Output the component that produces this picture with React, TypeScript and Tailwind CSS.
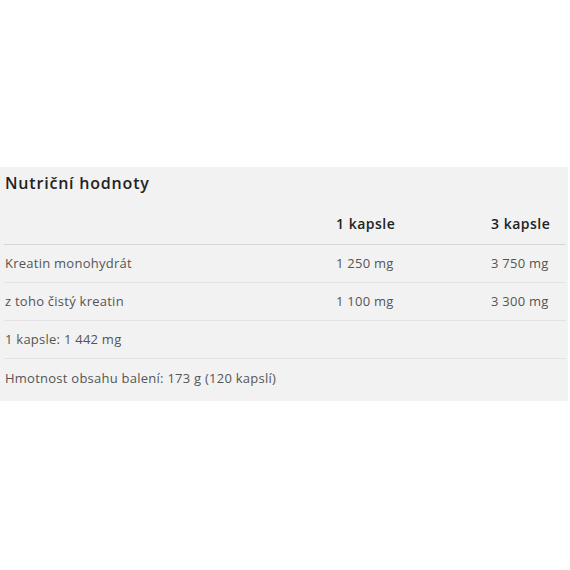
export default function App() {
  const rows = [
    ["Kreatin monohydrát", "1 250 mg", "3 750 mg"],
    ["z toho čistý kreatin", "1 100 mg", "3 300 mg"],
  ];
  return (
    <div className="w-[570px] h-[570px] bg-white" style={{ fontFamily: '"Open Sans", sans-serif' }}>
      <div className="h-[167px]" />
      <div className="w-[568px] bg-[#f2f2f2] pl-[4px] pr-[2px] pb-[4px]">
        <div className="h-[32px] flex items-center pl-[1px] text-[16px] tracking-[0.8px] font-semibold text-[#222]">
          Nutriční hodnoty
        </div>
        <div className="grid grid-cols-[332px_155px_1fr] h-[46px] pt-[3px] items-center border-b border-[#d6d6d6] text-[14px] tracking-[0.5px] font-semibold text-[#222]">
          <div />
          <div>1 kapsle</div>
          <div>3 kapsle</div>
        </div>
        {rows.map((r) => (
          <div key={r[0]} className="grid grid-cols-[332px_155px_1fr] h-[38px] pt-[1px] items-center border-b border-[#e3e3e3] text-[13px] tracking-[0.25px] text-[#555]">
            <div className="pl-[1px]">{r[0]}</div>
            <div>{r[1]}</div>
            <div>{r[2]}</div>
          </div>
        ))}
        <div className="h-[38px] pt-[1px] flex items-center pl-[1px] border-b border-[#e3e3e3] text-[13px] tracking-[0.25px] text-[#555]">
          1 kapsle: 1 442 mg
        </div>
        <div className="h-[38px] pt-[1px] flex items-center pl-[1px] text-[13px] tracking-[0.25px] text-[#555]">
          Hmotnost obsahu balení: 173 g (120 kapslí)
        </div>
      </div>
    </div>
  );
}
